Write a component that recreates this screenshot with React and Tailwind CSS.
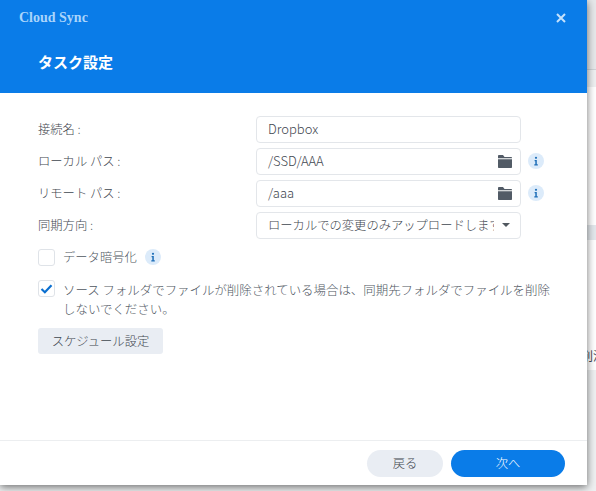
const infoIcon = (
  <svg viewBox="0 0 16 16" className="h-4 w-4">
    <circle cx="8" cy="8" r="8" fill="#dcebfa" />
    <circle cx="8" cy="4.8" r="1.1" fill="#1f6fb8" />
    <path d="M6.6 7h2.2v4.2h1V12.4H6.3v-1.2h1V8.2h-.7z" fill="#1f6fb8" />
  </svg>
);

const folderIcon = (
  <svg viewBox="0 0 14 13" className="h-[13px] w-[14px]">
    <path d="M0 1.2C0 .5.4 0 1 0h4l1.5 2H13c.6 0 1 .4 1 1v.2H0z" fill="#525b66" />
    <path d="M0 4.2h14V12c0 .6-.4 1-1 1H1c-.6 0-1-.4-1-1z" fill="#525b66" />
  </svg>
);

function Row({ label, children, info }) {
  return (
    <div className="flex h-[28px] items-center">
      <div className="w-[218px] text-[12.3px] font-light text-[#3f474f]">{label}</div>
      <div className="flex h-[27px] w-[265px] items-center rounded-[4px] border border-[#e3e6ea] bg-white pl-[11px] pr-[8px] text-[13px] font-light text-[#3f474f]">
        {children}
      </div>
      {info && <span className="ml-[7px]">{infoIcon}</span>}
    </div>
  );
}

export default function App() {
  return (
    <div
      className="relative flex h-[491px] w-[596px] flex-col overflow-hidden bg-white text-[12.3px]"
      style={{ fontFamily: '"Noto Sans CJK JP", "Noto Sans", sans-serif' }}
    >
      {/* ページ背景 (右端) */}
      <div className="h-[70px] border-b border-[#cfd3d6] bg-[#e6e8ea]" />
      <div className="h-[17px] bg-[#eef0f1]" />
      <div className="h-[138px] bg-white" />
      <div className="h-[15px] bg-[#e3e8ec]" />
      <div className="relative h-[130px] bg-white">
        <span className="absolute left-[581px] top-[110px] whitespace-nowrap text-[12px] leading-none text-[#3f474f]">削済</span>
      </div>
      <div className="flex-1 bg-[#eef0f1]" />

      <div className="absolute left-0 top-0 flex h-[485px] w-[587px] flex-col bg-white shadow-[0_2px_8px_rgba(0,0,0,0.55)]">
        <div className="h-[93px] bg-[#0a7ce8] pl-[38px]">
          <div className="relative">
            <div
              className="absolute left-[-19px] top-[9px] text-[14px] font-bold leading-[17px] text-[#a9d4fb]"
              style={{ fontFamily: '"Liberation Serif", serif' }}
            >
              Cloud Sync
            </div>
            <svg viewBox="0 0 10 10" className="absolute left-[518px] top-[13px] h-[10px] w-[10px]">
              <path d="M1 1l8 8M9 1l-8 8" stroke="#c5e2fc" strokeWidth="2" fill="none" />
            </svg>
          </div>
          <div className="pt-[50px] text-[15px] font-bold leading-[24px] text-white">タスク設定</div>
        </div>

        <div className="flex flex-1 flex-col pl-[38px] pt-[22px]">
          <div className="flex flex-col gap-[4px]">
            <Row label="接続名 :">Dropbox</Row>
            <Row label="ローカル パス :" info>
              <span className="flex-1">/SSD/AAA</span>
              {folderIcon}
            </Row>
            <Row label="リモート パス :" info>
              <span className="flex-1">/aaa</span>
              {folderIcon}
            </Row>
            <Row label="同期方向 :">
              <span className="flex-1 overflow-hidden whitespace-nowrap text-[12.3px]">ローカルでの変更のみアップロードします</span>
              <svg viewBox="0 0 8 4" className="ml-[8px] mr-[2px] h-[4px] w-[8px] shrink-0">
                <path d="M0 0h8L4 4z" fill="#50585f" />
              </svg>
            </Row>
          </div>

          <div className="mt-[9px] flex h-[18px] items-center">
            <span className="h-[17px] w-[17px] rounded-[3px] border border-[#dfe3e8] bg-white" />
            <span className="ml-[8px] font-light text-[#4f575f]">データ暗号化</span>
            <span className="ml-[8px]">{infoIcon}</span>
          </div>

          <div className="mt-[13px] flex">
            <span className="mt-[1px] flex h-[17px] w-[17px] shrink-0 items-center justify-center rounded-[3px] border border-[#dfe3e8] bg-white">
              <svg viewBox="0 0 14 11" className="h-[10px] w-[13px]">
                <path d="M1.5 5.5L5.2 9 12.5 1.5" stroke="#0a6fd0" strokeWidth="2.4" fill="none" />
              </svg>
            </span>
            <p className="ml-[8px] mt-[2px] w-[492px] text-[12.45px] font-light leading-[18.5px] text-[#4f575f]">
              ソース フォルダでファイルが削除されている場合は、同期先フォルダでファイルを削除しないでください。
            </p>
          </div>

          <button className="mt-[10px] h-[26px] w-[125px] rounded-[3px] bg-[#e9edf3] font-light text-[#3f474f]">
            スケジュール設定
          </button>
        </div>

        <div className="flex h-[45px] items-center justify-end gap-[8px] border-t border-[#eceef0] pr-[22px]">
          <button className="h-[27px] w-[76px] rounded-full bg-[#e9edf3] font-light text-[#3f474f]">戻る</button>
          <button className="h-[27px] w-[114px] rounded-full bg-[#0a7ce8] font-light text-white">次へ</button>
        </div>
      </div>
    </div>
  );
}
